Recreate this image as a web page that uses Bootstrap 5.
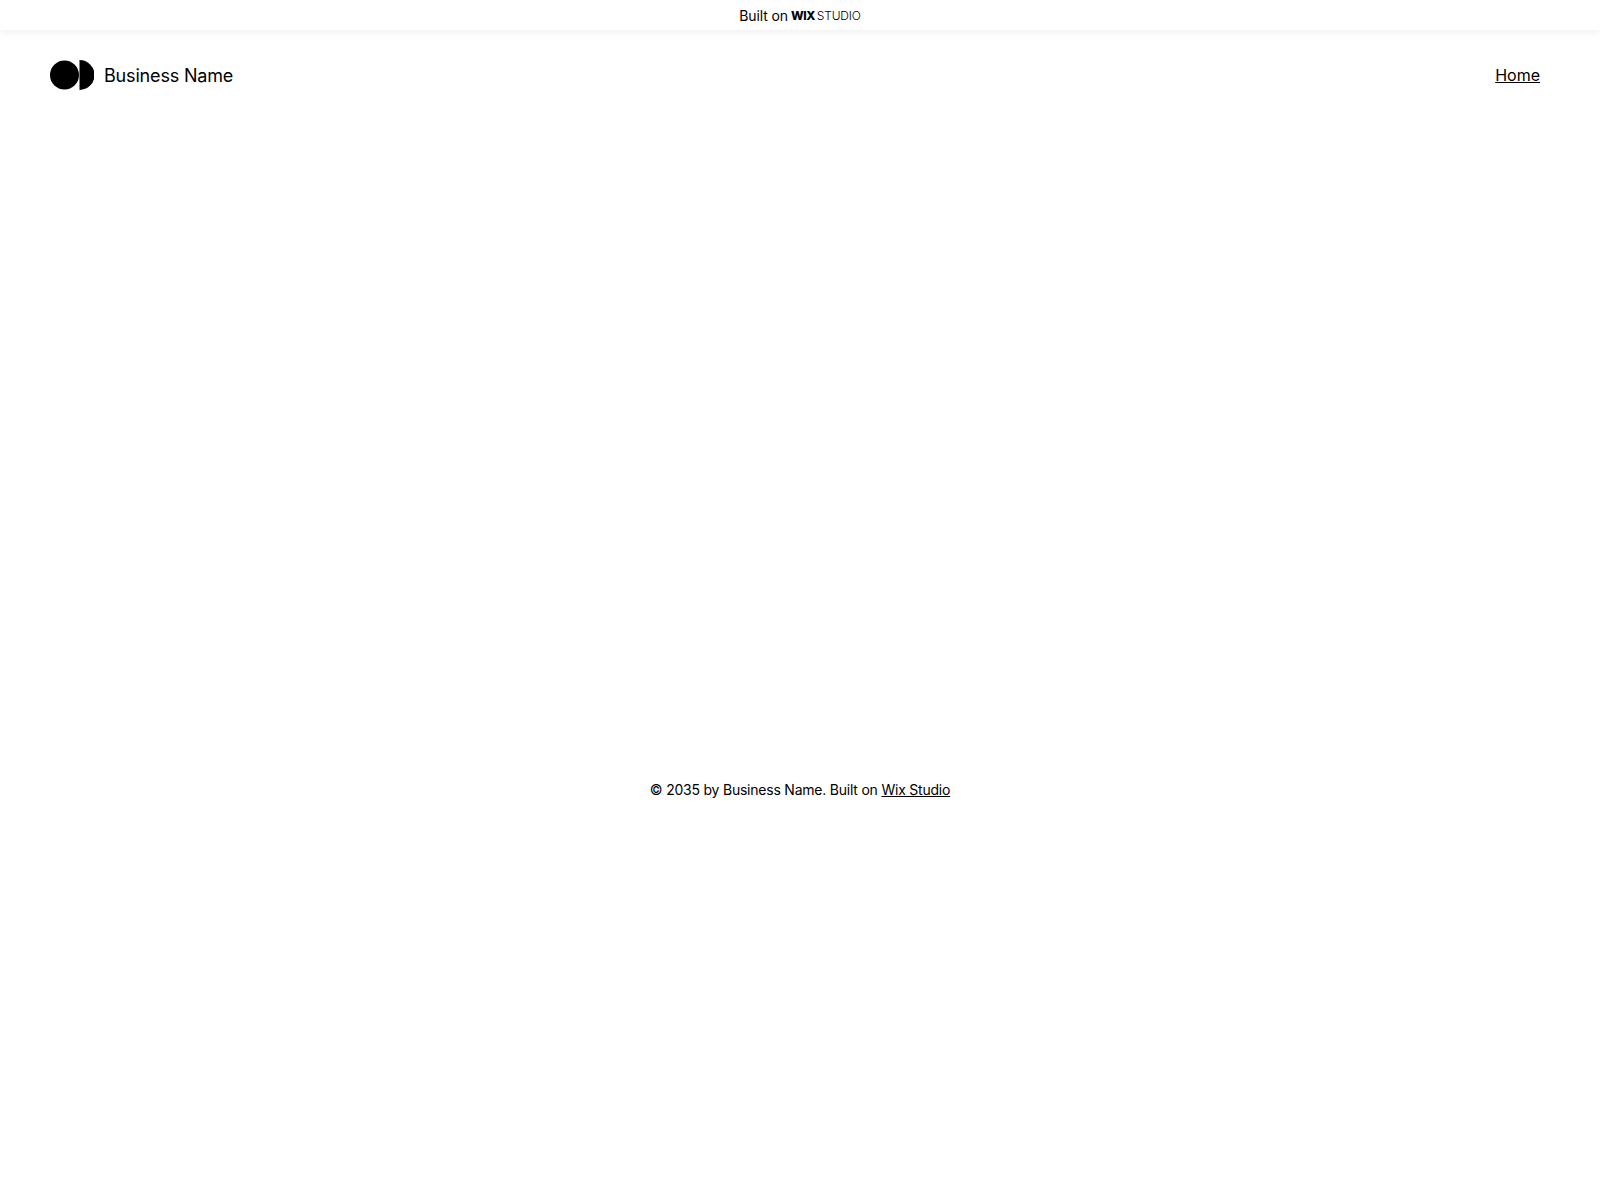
<!DOCTYPE html>
<html lang="en">
<head>
<meta charset="utf-8">
<title>Business Name</title>
<link href="https://cdn.jsdelivr.net/npm/bootstrap@5.3.0/dist/css/bootstrap.min.css" rel="stylesheet">
<style>
html, body { background: #fff; color: #000; font-family: Inter, "Liberation Sans", sans-serif; }
.page-shell { min-height: 1200px; }
.wix-bar { height: 30px; padding-top: 1px; font-size: 14px; letter-spacing: -.1px; box-shadow: 0 2px 8px rgba(0,0,0,.07); }
.wix-mark { font-weight: 800; font-size: 12px; letter-spacing: -.5px; margin-left: 3px; }
.wix-studio { font-weight: 300; font-size: 12px; letter-spacing: -.15px; margin-left: 2px; }
.site-head { height: 90px; padding: 0 60px 0 50px; }
.brand-name { font-size: 18px; letter-spacing: -.17px; color: #000; margin-left: 10px; }
.home-link { font-size: 16px; color: #000; }
.site-foot { margin-top: 660px; font-size: 14px; line-height: 20px; letter-spacing: -.22px; }
.site-foot a { color: #000; }
</style>
</head>
<body>
<div class="page-shell d-flex flex-column">
  <div class="wix-bar d-flex align-items-center justify-content-center bg-white">
    <span>Built on</span><span class="wix-mark">WIX</span><span class="wix-studio">STUDIO</span>
  </div>
  <header class="site-head d-flex align-items-center justify-content-between">
    <div class="d-flex align-items-center">
      <svg width="44" height="30" viewBox="0 0 44 30" aria-hidden="true">
        <circle cx="14.5" cy="15" r="14.5" fill="#000"/>
        <path d="M29.5 0 A15 15 0 0 1 29.5 30 Z" fill="#000"/>
      </svg>
      <span class="brand-name">Business Name</span>
    </div>
    <nav><a class="home-link" href="#">Home</a></nav>
  </header>
  <footer class="site-foot text-center">© 2035 by Business Name. Built on <a href="#">Wix Studio</a></footer>
</div>
<script src="https://cdn.jsdelivr.net/npm/bootstrap@5.3.0/dist/js/bootstrap.bundle.min.js"></script>
</body>
</html>
